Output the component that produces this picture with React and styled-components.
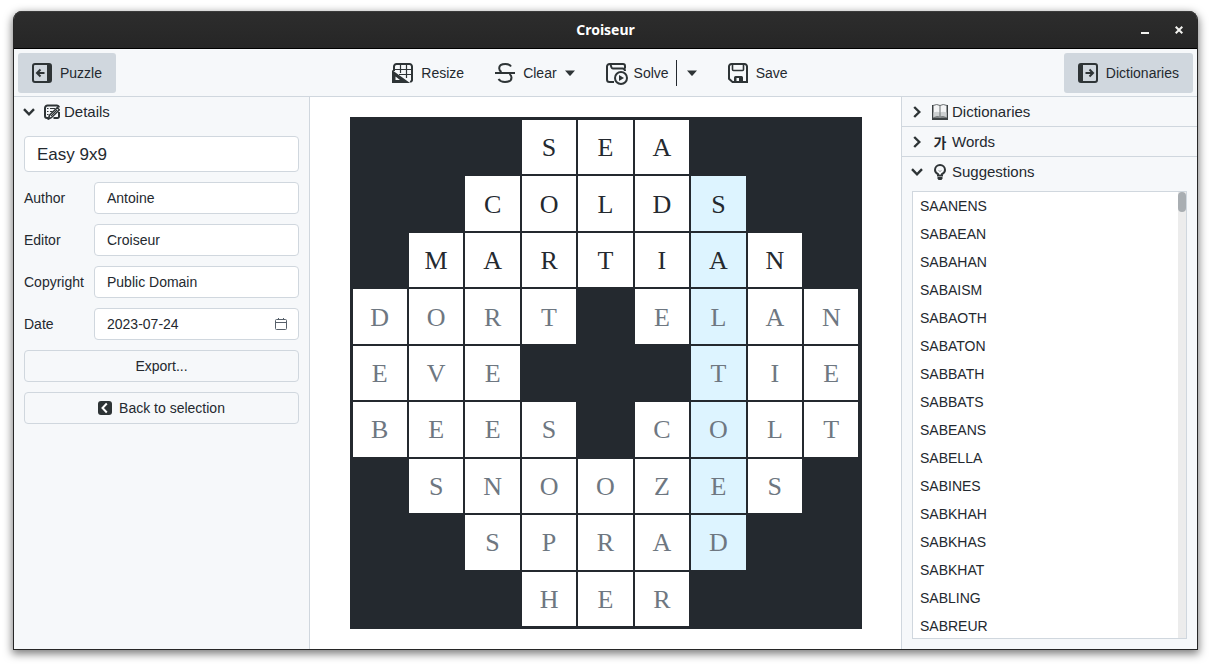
import React, { useState } from "react";
import styled, { createGlobalStyle } from "styled-components";

const GlobalStyle = createGlobalStyle`
  *, *::before, *::after { box-sizing: border-box; }
  body {
    margin: 0;
    background: #ffffff;
    color: #24292f;
    font: 14px/20px "Liberation Sans", Arial, sans-serif;
  }
  button, input { font: inherit; color: inherit; }
  svg { display: block; flex: none; }
`;

const Desktop = styled.div`
  height: 100vh;
  min-height: 560px;
  padding: 11px 13px 16px;
`;

const Window = styled.div`
  height: 100%;
  display: flex;
  flex-direction: column;
  border: 1px solid #272727;
  border-top: 0;
  border-radius: 9px 9px 0 0;
  background: #f6f8fa;
  box-shadow: 0 3px 9px 1px rgba(0, 0, 0, 0.5);
`;

const TitleBar = styled.header`
  display: grid;
  grid-template-columns: 1fr auto 1fr;
  align-items: center;
  height: 38px;
  flex: none;
  border-bottom: 1px solid #000000;
  border-radius: 8px 8px 0 0;
  background: linear-gradient(#2d2d2d, #262626);
  box-shadow: inset 0 1px #3b3b3b;
  color: #ffffff;
`;

const Title = styled.h1`
  grid-column: 2;
  margin: 0;
  font: 700 14px/20px "Noto Sans", "Open Sans", sans-serif;
`;

const WindowControls = styled.div`
  display: flex;
  justify-content: flex-end;
  padding-right: 6px;
`;

const WindowButton = styled.button`
  display: grid;
  place-items: center;
  width: 24px;
  height: 24px;
  margin-left: 10px;
  padding: 0;
  border: 0;
  background: none;
  color: #f2f2ef;
`;

const Toolbar = styled.div`
  display: flex;
  justify-content: space-between;
  flex: none;
  padding: 4px 4px 3px;
  border-bottom: 1px solid #d0d7de;
`;

const ToolGroup = styled.div`
  display: flex;
  align-items: center;
  gap: 3px;
`;

const SplitTool = styled.div`
  display: flex;
  align-items: center;
`;

const ToolButton = styled.button`
  display: flex;
  align-items: center;
  gap: 8px;
  height: 40px;
  padding: 0 ${(p) => (p.$split ? 7 : 14)}px 0 14px;
  border: 0;
  border-radius: 3px;
  background: ${(p) => (p.$active ? "#d0d7de" : "transparent")};
  white-space: nowrap;
`;

const SplitButton = styled.button`
  display: grid;
  place-items: center;
  height: 26px;
  padding: 0 14px 0 10px;
  border: 0;
  border-left: 1px solid #24292f;
  background: none;
`;

const Body = styled.div`
  flex: 1;
  min-height: 0;
  display: grid;
  grid-template-columns: 296px minmax(0, 1fr) 296px;
`;

const Sidebar = styled.aside`
  display: flex;
  flex-direction: column;
  min-height: 0;
  border: 0 solid #d0d7de;
  border-width: ${(p) => (p.$side === "left" ? "0 1px 0 0" : "0 0 0 1px")};
`;

const SectionHeader = styled.button`
  display: grid;
  grid-template-columns: 12px 21px 1fr;
  column-gap: 4px;
  align-items: center;
  height: 30px;
  flex: none;
  width: 100%;
  padding: 0 9px;
  border: 0;
  border-bottom: 1px solid ${(p) => (p.$open ? "transparent" : "#d0d7de")};
  background: none;
  font-size: 15px;
  text-align: left;

  > :first-child { justify-self: center; }
  > :nth-child(2) { justify-self: end; }
`;

const Hangul = styled.span`
  width: 16px;
  font: 700 14px/16px "Noto Sans CJK KR", sans-serif;
  text-align: center;
`;

const Form = styled.form`
  display: flex;
  flex-direction: column;
  gap: 10px;
  padding: 9px 10px 10px;
`;

const Field = styled.div`
  display: grid;
  grid-template-columns: 60px minmax(0, 1fr);
  column-gap: 10px;
  align-items: center;
`;

const TextBox = styled.input`
  width: 100%;
  height: ${(p) => (p.$large ? 36 : 32)}px;
  padding: ${(p) => (p.$large ? 1 : 0)}px 12px 0;
  border: 1px solid #d0d7de;
  border-radius: 4px;
  background: #ffffff;
  font-size: ${(p) => (p.$large ? 17 : 14)}px;
`;

const DateBox = styled.div`
  display: flex;
  align-items: center;
  height: 32px;
  padding: 0 11px 0 12px;
  border: 1px solid #d0d7de;
  border-radius: 4px;
  background: #ffffff;

  input {
    flex: 1;
    min-width: 0;
    padding: 0;
    border: 0;
    background: none;
  }

  button {
    padding: 0;
    border: 0;
    background: none;
    color: #57606a;
  }
`;

const WideButton = styled.button`
  display: flex;
  align-items: center;
  justify-content: center;
  gap: 7px;
  height: 32px;
  padding: 0 12px;
  border: 1px solid #d0d7de;
  border-radius: 4px;
  background: #f6f8fa;
`;

const Stage = styled.main`
  display: flex;
  justify-content: center;
  min-height: 0;
  padding: 20px;
  background: #ffffff;
`;

const Board = styled.div`
  display: grid;
  grid-template-columns: repeat(9, minmax(0, 1fr));
  grid-template-rows: repeat(9, minmax(0, 1fr));
  gap: 2px;
  height: 100%;
  aspect-ratio: 1;
  padding: 3px;
  background: #24292f;
`;

const Block = styled.span`
  background: #24292f;
`;

const Cell = styled.input`
  width: 100%;
  height: 100%;
  min-width: 0;
  padding: 2px 0 0;
  border: 0;
  border-radius: 0;
  background: ${(p) => (p.$marked ? "#ddf4ff" : "#ffffff")};
  color: ${(p) => (p.$suggested ? "#6e7781" : "#24292f")};
  font: 26px/30px "Liberation Serif", "Times New Roman", serif;
  text-align: center;
  text-transform: uppercase;
`;

const ListFrame = styled.div`
  display: flex;
  flex: 1;
  min-height: 0;
  margin: 4px 10px 10px;
  border: 1px solid #d0d7de;
  background: #ffffff;
`;

const WordList = styled.ul`
  flex: 1;
  margin: 0;
  padding: 0;
  overflow-y: auto;
  scrollbar-width: none;
  list-style: none;
`;

const Word = styled.li`
  padding: 4px 7px;
`;

const Track = styled.div`
  width: 8px;
  background: #ececec;
`;

const Thumb = styled.div`
  height: 20px;
  border-radius: 4px;
  background: #a9aeb2;
`;

const ink = "#2e3436";

const PanelIcon = ({ flip }) => (
  <svg width="20" height="20" viewBox="0 0 20 20" aria-hidden="true">
    <g transform={flip ? "matrix(-1 0 0 1 20 0)" : undefined}>
      <rect x="1" y="1" width="18" height="18" rx="2" fill="none" stroke={ink} strokeWidth="2" />
      <path d="M15 1h3a1 1 0 0 1 1 1v16a1 1 0 0 1-1 1h-3z" fill={ink} />
      <path d="M5 10h7.500M8.500 6.500L5 10l3.500 3.500" fill="none" stroke={ink} strokeWidth="2" />
    </g>
  </svg>
);

const ResizeIcon = () => (
  <svg width="21" height="20" viewBox="0 0 21 20" aria-hidden="true">
    <path d="M2 8V3.500A2.500 2.500 0 0 1 4.500 1h13A2.500 2.500 0 0 1 20 3.500V17a1.500 1.500 0 0 1-2 1.500" fill="none" stroke={ink} strokeWidth="2" />
    <path d="M8.500 1v9M14.500 1v14M2 6.500h18M7 11.500h13" stroke={ink} strokeWidth="1.200" />
    <path d="M0 7L18 20H0zM3.500 13.500V17H8z" fill={ink} fillRule="evenodd" />
  </svg>
);

const ClearIcon = () => (
  <svg width="20" height="20" viewBox="0 0 20 20" fill="none" stroke={ink} strokeWidth="2" aria-hidden="true">
    <path d="M16 3.500C15 1.700 13 1 10.500 1 6.500 1 4.200 2.700 4.200 5.200c0 1.800.8 3 2.300 3.800M14.500 11c1.200.8 2 1.900 2 3.400C16.500 17.200 14 19 10 19c-3 0-5.200-1-6.500-3" />
    <path d="M0 10h20" />
  </svg>
);

const SolveIcon = () => (
  <svg width="20" height="20" viewBox="0 0 20 20" overflow="visible" fill="none" stroke={ink} strokeWidth="2" aria-hidden="true">
    <path d="M8 19H3.500A2.500 2.500 0 0 1 1 16.500V3.500A2.500 2.500 0 0 1 3.500 1H17a2 2 0 0 1 2 2v2.500M4.500 1.500l1 3A1.500 1.500 0 0 0 7 5.500h9.500A2.500 2.500 0 0 1 19 8" />
    <circle cx="15" cy="15" r="6" />
    <path d="M13 12l5 3-5 3z" fill={ink} stroke="none" />
  </svg>
);

const SaveIcon = () => (
  <svg width="20" height="20" viewBox="0 0 20 20" aria-hidden="true">
    <path d="M3.500 1h13A2.500 2.500 0 0 1 19 3.500V19H4.500L1 15.800V3.500A2.500 2.500 0 0 1 3.500 1z" fill="none" stroke={ink} strokeWidth="2" />
    <path d="M4.500 1v5.500a1 1 0 0 0 1 1h9a1 1 0 0 0 1-1V1" fill="none" stroke={ink} strokeWidth="1.600" />
    <path d="M6 20v-5.500A1.500 1.500 0 0 1 7.500 13h6a1.500 1.500 0 0 1 1.500 1.500V20zM8.500 15v3.500H11V15z" fill={ink} fillRule="evenodd" />
  </svg>
);

const CaretIcon = () => (
  <svg width="10" height="6" viewBox="0 0 10 6" aria-hidden="true">
    <path d="M0 0.500h10L5.800 5.200a1 1 0 0 1-1.600 0z" fill={ink} />
  </svg>
);

const Chevron = ({ open }) =>
  open ? (
    <svg width="12" height="8" viewBox="0 0 12 8" aria-hidden="true">
      <path d="M1 1.200L6 6.300l5-5.100" fill="none" stroke={ink} strokeWidth="2.400" />
    </svg>
  ) : (
    <svg width="8" height="12" viewBox="0 0 8 12" aria-hidden="true">
      <path d="M1.200 1l5.100 5-5.100 5" fill="none" stroke={ink} strokeWidth="2.400" />
    </svg>
  );

const DetailsIcon = () => (
  <svg width="16" height="16" viewBox="0 0 16 16" aria-hidden="true">
    <path d="M4 14H3a2 2 0 0 1-2-2V4a2.500 2.500 0 0 1 2.500-2.500h9A2.500 2.500 0 0 1 15 3.500M15 8v4.500a1.500 1.500 0 0 1-1.500 1.500H9.500" fill="none" stroke={ink} strokeWidth="2" />
    <path d="M3 4.500h1.500M6 4.500h5M3 7.500h1.500M6 7.500h2.500M3 10.500h1.500" stroke={ink} strokeWidth="1.200" />
    <path d="M4.500 15l.9-3.700L13.300 3.700l2 2.100-8 7.900z" fill="#f6f8fa" stroke={ink} strokeWidth="1.600" />
    <path d="M7 12l6-6" stroke={ink} strokeWidth="1" />
  </svg>
);

const BookIcon = () => (
  <svg width="16" height="16" viewBox="0 0 16 16" aria-hidden="true">
    <path d="M0 1h16v15H0z" fill="#3c4143" />
    <path d="M1.500 1.500Q5 -.5 8 1.500q3-2 6.500 0v12q-3.500-1.500-6.500 0-3-1.500-6.500 0z" fill="#f4f5f6" />
    <path d="M1.500 8.500Q5 7 8 8.500q3-1.500 6.500 0v5H1.500z" fill="#cdd0d1" />
    <path d="M1 1.500Q5 -.5 8 1.500q3-2 7 0" fill="none" stroke="#6b7072" strokeWidth="1" />
    <path d="M8 1.500V12.500M2 13.500q3-1.500 6-.5 3-1 6 .5" fill="none" stroke="#6b7072" strokeWidth="1" />
  </svg>
);

const BulbIcon = () => (
  <svg width="16" height="16" viewBox="0 0 16 16" aria-hidden="true">
    <path d="M6 11.500V10.200C3.800 9 3 7.600 3 6a5 5 0 0 1 10 0c0 1.600-.8 3-3 4.200v1.300z" fill="none" stroke={ink} strokeWidth="2" />
    <path d="M5.500 13h5v1.500L9.500 16h-3l-1-1.500z" fill={ink} />
    <path d="M6.500 6.500L8 7.500l1.500-1" fill="none" stroke="#9ba0a3" strokeWidth="1" />
  </svg>
);

const CalendarIcon = () => (
  <svg width="12" height="12" viewBox="0 0 12 12" fill="none" stroke="currentColor" aria-hidden="true">
    <rect x=".5" y="1.500" width="11" height="10" rx="1" />
    <path d="M0 4.500h12M3.500 0v2M8.500 0v2" />
  </svg>
);

const BackIcon = () => (
  <svg width="14" height="14" viewBox="0 0 14 14" aria-hidden="true">
    <rect width="14" height="14" rx="3" fill={ink} />
    <path d="M8.800 2.500L4.500 7l4.300 4.500" fill="none" stroke="#ffffff" strokeWidth="2" />
  </svg>
);

const rows = [
  "...SEA...",
  "..COLDS..",
  ".MARTIAN.",
  "DORT.ELAN",
  "EVE...TIE",
  "BEES.COLT",
  ".SNOOZES.",
  "..SPRAD..",
  "...HER...",
];
const markedColumn = 6;
const firstSuggestedRow = 3;

const words = [
  "SAANENS", "SABAEAN", "SABAHAN", "SABAISM", "SABAOTH", "SABATON",
  "SABBATH", "SABBATS", "SABEANS", "SABELLA", "SABINES", "SABKHAH",
  "SABKHAS", "SABKHAT", "SABLING", "SABREUR",
];

const Crossword = () => (
  <Board role="group" aria-label="Crossword grid">
    {rows.flatMap((row, y) =>
      [...row].map((letter, x) =>
        letter === "." ? (
          <Block key={`${x}-${y}`} />
        ) : (
          <Cell
            key={`${x}-${y}`}
            aria-label={`Row ${y + 1}, column ${x + 1}`}
            maxLength={1}
            defaultValue={letter}
            $marked={x === markedColumn}
            $suggested={y >= firstSuggestedRow}
          />
        )
      )
    )}
  </Board>
);

const LabelledField = ({ id, label, value }) => (
  <Field>
    <label htmlFor={id}>{label}</label>
    <TextBox id={id} defaultValue={value} />
  </Field>
);

export default function App() {
  const [open, setOpen] = useState({ details: true, suggestions: true });
  const toggle = (name) => setOpen((o) => ({ ...o, [name]: !o[name] }));

  return (
    <Desktop>
      <GlobalStyle />
      <Window>
        <TitleBar>
          <Title>Croiseur</Title>
          <WindowControls>
            <WindowButton aria-label="Minimize">
              <svg width="8" height="8" viewBox="0 0 8 8">
                <path d="M0 7h8" stroke="currentColor" strokeWidth="2" />
              </svg>
            </WindowButton>
            <WindowButton aria-label="Close">
              <svg width="8" height="8" viewBox="0 0 8 8">
                <path d="M.7.700l6.600 6.600M7.300.700L.7 7.300" stroke="currentColor" strokeWidth="2" />
              </svg>
            </WindowButton>
          </WindowControls>
        </TitleBar>

        <Toolbar>
          <ToolButton $active><PanelIcon />Puzzle</ToolButton>
          <ToolGroup>
            <ToolButton><ResizeIcon />Resize</ToolButton>
            <ToolButton>
              <ClearIcon />Clear
              <CaretIcon />
            </ToolButton>
            <SplitTool>
              <ToolButton $split><SolveIcon />Solve</ToolButton>
              <SplitButton aria-label="Solve options"><CaretIcon /></SplitButton>
            </SplitTool>
            <ToolButton><SaveIcon />Save</ToolButton>
          </ToolGroup>
          <ToolButton $active><PanelIcon flip />Dictionaries</ToolButton>
        </Toolbar>

        <Body>
          <Sidebar $side="left">
            <SectionHeader $open aria-expanded={open.details} onClick={() => toggle("details")}>
              <Chevron open={open.details} />
              <DetailsIcon />
              <span>Details</span>
            </SectionHeader>
            {open.details && (
              <Form onSubmit={(e) => e.preventDefault()}>
                <TextBox $large aria-label="Title" defaultValue="Easy 9x9" />
                <LabelledField id="author" label="Author" value="Antoine" />
                <LabelledField id="editor" label="Editor" value="Croiseur" />
                <LabelledField id="copyright" label="Copyright" value="Public Domain" />
                <Field>
                  <label htmlFor="date">Date</label>
                  <DateBox>
                    <input id="date" defaultValue="2023-07-24" />
                    <button type="button" aria-label="Pick a date"><CalendarIcon /></button>
                  </DateBox>
                </Field>
                <WideButton type="button">Export...</WideButton>
                <WideButton type="button"><BackIcon />Back to selection</WideButton>
              </Form>
            )}
          </Sidebar>

          <Stage><Crossword /></Stage>

          <Sidebar $side="right">
            <SectionHeader aria-expanded={false}>
              <Chevron />
              <BookIcon />
              <span>Dictionaries</span>
            </SectionHeader>
            <SectionHeader aria-expanded={false}>
              <Chevron />
              <Hangul aria-hidden="true">가</Hangul>
              <span>Words</span>
            </SectionHeader>
            <SectionHeader $open aria-expanded={open.suggestions} onClick={() => toggle("suggestions")}>
              <Chevron open={open.suggestions} />
              <BulbIcon />
              <span>Suggestions</span>
            </SectionHeader>
            {open.suggestions && (
              <ListFrame>
                <WordList>
                  {words.map((w) => <Word key={w}>{w}</Word>)}
                </WordList>
                <Track><Thumb /></Track>
              </ListFrame>
            )}
          </Sidebar>
        </Body>
      </Window>
    </Desktop>
  );
}
